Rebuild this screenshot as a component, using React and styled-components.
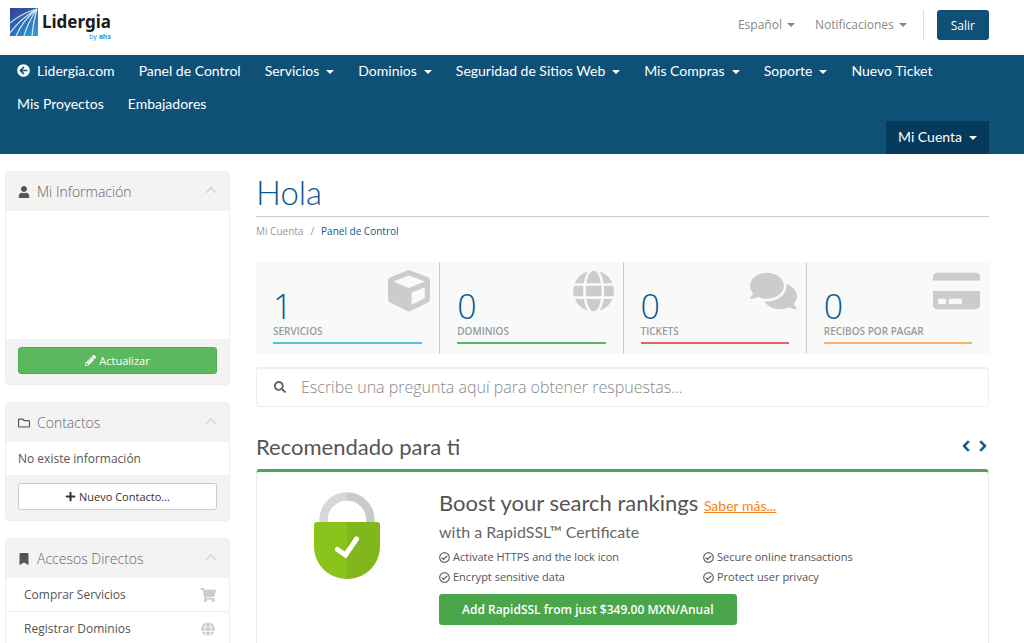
import React from "react";
import styled, { createGlobalStyle } from "styled-components";
import {
  FaArrowCircleLeft,
  FaBookmark,
  FaChevronLeft,
  FaChevronRight,
  FaComments,
  FaCreditCard,
  FaCube,
  FaGlobe,
  FaPencilAlt,
  FaPlus,
  FaRegCheckCircle,
  FaRegFolder,
  FaSearch,
  FaShoppingCart,
  FaUser,
} from "react-icons/fa";
import { ChevronUp } from "lucide-react";

const menu = [
  { nombre: "Lidergia.com", icono: <FaArrowCircleLeft /> },
  { nombre: "Panel de Control" },
  { nombre: "Servicios", lista: true },
  { nombre: "Dominios", lista: true },
  { nombre: "Seguridad de Sitios Web", lista: true },
  { nombre: "Mis Compras", lista: true },
  { nombre: "Soporte", lista: true },
  { nombre: "Nuevo Ticket" },
  { nombre: "Mis Proyectos" },
  { nombre: "Embajadores" },
];

const resumen = [
  { total: 1, nombre: "Servicios", color: "#5bc0de", Icono: FaCube },
  { total: 0, nombre: "Dominios", color: "#5cb85c", Icono: FaGlobe },
  { total: 0, nombre: "Tickets", color: "#e06666", Icono: FaComments },
  { total: 0, nombre: "Recibos por pagar", color: "#fbb161", Icono: FaCreditCard },
];

const ventajas = [
  "Activate HTTPS and the lock icon",
  "Secure online transactions",
  "Encrypt sensitive data",
  "Protect user privacy",
];

function Logo() {
  return (
    <LogoStyle href="#">
      <svg width="28" height="28" viewBox="0 0 28 28" aria-hidden="true">
        <defs>
          <linearGradient id="cielo" x1="0" y1="0" x2="0.8" y2="1">
            <stop offset="0" stopColor="#3a3d92" />
            <stop offset="0.4" stopColor="#2f5fa8" />
            <stop offset="1" stopColor="#2f98d4" />
          </linearGradient>
        </defs>
        <rect width="28" height="28" fill="url(#cielo)" />
        <g stroke="#d5ecf8" strokeWidth="1.2" fill="none">
          <path d="M27 1 Q12 5 0 15" />
          <path d="M27 1 Q11 10 0 25" />
          <path d="M27 1 Q13 12 6 28" />
          <path d="M27 1 Q18 14 14 28" />
          <path d="M27 1 Q23 14 22 28" />
        </g>
      </svg>
      <NombreLogo>
        Lidergia
        <small>
          by <b>ahs</b>
        </small>
      </NombreLogo>
    </LogoStyle>
  );
}

function Panel({ icono, titulo, children, pie }) {
  return (
    <PanelStyle>
      <CabeceraPanel>
        {icono}
        <h3>{titulo}</h3>
        <BotonPlegar type="button" aria-label={`Plegar ${titulo}`}>
          <ChevronUp />
        </BotonPlegar>
      </CabeceraPanel>
      {children}
      {pie && <PiePanel>{pie}</PiePanel>}
    </PanelStyle>
  );
}

function Candado() {
  return (
    <svg width="66" height="88" viewBox="0 0 66 88" aria-hidden="true">
      <path d="M9.5 32 V27.5 A23.5 23.5 0 0 1 33 4.5" fill="none" stroke="#d5d7d8" strokeWidth="8.5" />
      <path d="M33 4.5 A23.5 23.5 0 0 1 56.5 27.5 V32" fill="none" stroke="#c9cacb" strokeWidth="8.5" />
      <path d="M33 30 H3 Q0 30 0 33 V54 C0 73 15 87 33 87 Z" fill="#8bc31d" />
      <path d="M33 30 H63 Q66 30 66 33 V54 C66 73 51 87 33 87 Z" fill="#82b71b" />
      <path d="M23.5 57.5 L31.5 63 L42.5 47" fill="none" stroke="#fff" strokeWidth="5" strokeLinecap="round" />
    </svg>
  );
}

export default function App() {
  return (
    <>
      <EstiloGlobal />
      <Encabezado>
        <Logo />
        <MenuSuperior>
          <Selector type="button">
            Español <Flecha />
          </Selector>
          <Selector type="button">
            Notificaciones <Flecha />
          </Selector>
          <Separador />
          <BotonSalir type="button">Salir</BotonSalir>
        </MenuSuperior>
      </Encabezado>

      <Navegacion>
        <ListaMenu>
          {menu.map(({ nombre, icono, lista }) => (
            <li key={nombre}>
              <EnlaceMenu href="#">
                {icono}
                {nombre}
                {lista && <Flecha />}
              </EnlaceMenu>
            </li>
          ))}
        </ListaMenu>
        <EnlaceMenu href="#" $activo>
          Mi Cuenta
          <Flecha />
        </EnlaceMenu>
      </Navegacion>

      <Pagina>
        <Lateral>
          <Panel
            icono={<FaUser />}
            titulo="Mi Información"
            pie={
              <BotonPanel type="button" $verde>
                <FaPencilAlt /> Actualizar
              </BotonPanel>
            }
          >
            <DatosCliente />
          </Panel>
          <Panel
            icono={<FaRegFolder />}
            titulo="Contactos"
            pie={
              <BotonPanel type="button">
                <FaPlus /> Nuevo Contacto...
              </BotonPanel>
            }
          >
            <TextoPanel>No existe información</TextoPanel>
          </Panel>
          <Panel icono={<FaBookmark />} titulo="Accesos Directos">
            <Acceso href="#">
              Comprar Servicios <FaShoppingCart />
            </Acceso>
            <Acceso href="#">
              Registrar Dominios <FaGlobe />
            </Acceso>
          </Panel>
        </Lateral>

        <Contenido>
          <Titulo>Hola</Titulo>
          <Migas>
            <a href="#">Mi Cuenta</a>
            <span>/</span>
            <strong>Panel de Control</strong>
          </Migas>

          <Resumen>
            {resumen.map(({ total, nombre, color, Icono }) => (
              <Tarjeta key={nombre} href="#">
                <IconoTarjeta>
                  <Icono preserveAspectRatio="xMaxYMid" />
                </IconoTarjeta>
                <Total>{total}</Total>
                <NombreTarjeta $color={color}>{nombre}</NombreTarjeta>
              </Tarjeta>
            ))}
          </Resumen>

          <Buscador>
            <FaSearch />
            <input
              type="text"
              aria-label="Buscar"
              placeholder="Escribe una pregunta aquí para obtener respuestas..."
            />
          </Buscador>

          <CabeceraPromo>
            <h3>Recomendado para ti</h3>
            <div>
              <BotonFlecha type="button" aria-label="Anterior">
                <FaChevronLeft />
              </BotonFlecha>
              <BotonFlecha type="button" aria-label="Siguiente">
                <FaChevronRight />
              </BotonFlecha>
            </div>
          </CabeceraPromo>

          <Promo>
            <ImagenPromo>
              <Candado />
            </ImagenPromo>
            <div>
              <TituloPromo>
                Boost your search rankings <a href="#">Saber más...</a>
              </TituloPromo>
              <SubtituloPromo>with a RapidSSL™ Certificate</SubtituloPromo>
              <Ventajas>
                {ventajas.map((ventaja) => (
                  <li key={ventaja}>
                    <FaRegCheckCircle /> {ventaja}
                  </li>
                ))}
              </Ventajas>
              <BotonPromo type="button">Add RapidSSL from just $349.00 MXN/Anual</BotonPromo>
            </div>
          </Promo>
        </Contenido>
      </Pagina>
    </>
  );
}

const EstiloGlobal = createGlobalStyle`
  :root {
    --azul: #0f5077;
    --azul-oscuro: #053a5c;
    --azul-texto: #0d578c;
    --gris-panel: #f3f3f3;
    --texto: #555555;
    --fuente: "Open Sans", "Noto Sans", sans-serif;
    --fuente-titulos: Lato, "Open Sans", sans-serif;
  }

  * {
    box-sizing: border-box;
    margin: 0;
    padding: 0;
  }

  body {
    background-color: #ffffff;
    color: var(--texto);
    font-family: var(--fuente);
    font-size: 12px;
  }

  button, input {
    font-family: inherit;
  }

  a {
    color: inherit;
    text-decoration: none;
  }

  ul {
    list-style: none;
  }
`;

const Encabezado = styled.header`
  display: flex;
  align-items: flex-start;
  justify-content: space-between;
  height: 55px;
  padding: 8px 35px 0 10px;
`;

const LogoStyle = styled.a`
  display: flex;
  gap: 4px;
`;

const NombreLogo = styled.span`
  display: flex;
  flex-direction: column;
  color: #1b1b1b;
  font-family: "Noto Sans", sans-serif;
  font-size: 17px;
  font-weight: 700;
  line-height: 27px;

  small {
    align-self: flex-end;
    color: #2f94d0;
    font-size: 7px;
    font-weight: 400;
    line-height: 4px;
  }
`;

const MenuSuperior = styled.div`
  display: flex;
  align-items: center;
  gap: 20px;
  padding-top: 2px;
`;

const Selector = styled.button`
  display: flex;
  align-items: center;
  gap: 5px;
  padding-bottom: 2px;
  border: none;
  background: none;
  color: #888888;
  font-size: 12px;
`;

const Separador = styled.span`
  width: 1px;
  height: 30px;
  margin: 0 -7px 0 -4px;
  background-color: #dddddd;
`;

const BotonSalir = styled.button`
  height: 30px;
  padding: 0 14px;
  border: none;
  border-radius: 3px;
  background-color: var(--azul);
  color: #ffffff;
  font-size: 12px;
`;

const Navegacion = styled.nav`
  display: flex;
  flex-direction: column;
  align-items: flex-end;
  padding: 0 35px 0 5px;
  background-color: var(--azul);
`;

const ListaMenu = styled.ul`
  display: flex;
  flex-wrap: wrap;
  width: 100%;
`;

const EnlaceMenu = styled.a`
  display: flex;
  align-items: center;
  gap: 7px;
  height: 33px;
  padding: 0 12px 2px;
  background-color: ${(props) => (props.$activo ? "var(--azul-oscuro)" : "transparent")};
  color: #ffffff;
  font-family: var(--fuente-titulos);
  font-size: 14px;

  svg {
    width: 13px;
    height: 13px;
  }
`;

const Flecha = styled.span`
  margin-top: 2px;
  border-top: 4px solid currentColor;
  border-left: 4px solid transparent;
  border-right: 4px solid transparent;
`;

const Pagina = styled.main`
  display: grid;
  grid-template-columns: 225px 1fr;
  gap: 26px;
  padding: 17px 35px 0 5px;
`;

const Lateral = styled.aside`
  display: flex;
  flex-direction: column;
  gap: 17px;
`;

const PanelStyle = styled.section`
  border: 1px solid #eeeeee;
  border-radius: 4px;
  overflow: hidden;
`;

const CabeceraPanel = styled.div`
  display: flex;
  align-items: center;
  gap: 7px;
  height: 39px;
  padding: 0 9px 0 12px;
  background-color: var(--gris-panel);

  h3 {
    flex: 1;
    color: #666666;
    font-size: 14px;
    font-weight: 300;
  }
`;

const BotonPlegar = styled.button`
  display: flex;
  padding-bottom: 4px;
  border: none;
  background: none;
  color: #d5d5d5;

  svg {
    width: 18px;
    height: 18px;
  }
`;

const DatosCliente = styled.div`
  height: 128px;
`;

const TextoPanel = styled.p`
  padding: 0 12px;
  line-height: 33px;
`;

const PiePanel = styled.div`
  padding: 8px 12px 10px;
  background-color: var(--gris-panel);
`;

const BotonPanel = styled.button`
  display: flex;
  align-items: center;
  justify-content: center;
  gap: 3px;
  width: 100%;
  height: 27px;
  border: 1px solid ${(props) => (props.$verde ? "#4cae4c" : "#cccccc")};
  border-radius: 3px;
  background-color: ${(props) => (props.$verde ? "#5cb85c" : "#ffffff")};
  color: ${(props) => (props.$verde ? "#ffffff" : "#333333")};
  font-size: 11px;
`;

const Acceso = styled.a`
  display: flex;
  align-items: center;
  justify-content: space-between;
  height: 34px;
  padding: 0 13px 0 18px;
  border-bottom: 1px solid #eeeeee;

  svg {
    width: 16px;
    height: 14px;
    color: #cccccc;
  }
`;

const Contenido = styled.div`
  min-width: 0;
`;

const Titulo = styled.h1`
  padding-bottom: 2px;
  border-bottom: 1px solid #cccccc;
  color: var(--azul-texto);
  font-family: var(--fuente-titulos);
  font-size: 33px;
  font-weight: 300;
  line-height: 43px;
`;

const Migas = styled.div`
  display: flex;
  gap: 7px;
  padding: 6px 0;
  color: #999999;
  font-size: 10px;
  line-height: 16px;

  strong {
    color: var(--azul-texto);
    font-weight: 400;
  }
`;

const Resumen = styled.div`
  display: grid;
  grid-template-columns: repeat(4, 1fr);
  margin-top: 17px;
`;

const Tarjeta = styled.a`
  position: relative;
  padding: 27px 17px 10px;
  background-color: #f8f9f9;

  & + & {
    border-left: 1px solid #cccccc;
  }
`;

const IconoTarjeta = styled.span`
  position: absolute;
  top: 8px;
  right: 9px;
  color: #cccccc;

  svg {
    display: block;
    width: 47px;
    height: 42px;
  }
`;

const Total = styled.div`
  color: var(--azul-texto);
  font-size: 34px;
  font-weight: 300;
  line-height: 34px;
`;

const NombreTarjeta = styled.div`
  padding-bottom: 3px;
  border-bottom: 2px solid ${(props) => props.$color};
  color: #999999;
  font-size: 10px;
  font-weight: 600;
  line-height: 16px;
  text-transform: uppercase;
`;

const Buscador = styled.label`
  display: flex;
  align-items: center;
  gap: 15px;
  height: 40px;
  margin-top: 13px;
  padding: 0 17px 1px;
  border: 1px solid #eeeeee;
  border-top-width: 2px;
  border-radius: 4px;

  svg {
    color: #666666;
  }

  input {
    flex: 1;
    border: none;
    outline: none;
    font-size: 16px;
    font-weight: 300;
  }

  input::placeholder {
    color: #888888;
  }
`;

const CabeceraPromo = styled.div`
  display: flex;
  align-items: center;
  justify-content: space-between;
  margin-top: 25px;

  h3 {
    font-family: var(--fuente-titulos);
    font-size: 22px;
    font-weight: 400;
    line-height: 30px;
  }
`;

const BotonFlecha = styled.button`
  margin-left: 5px;
  border: none;
  background: none;
  color: var(--azul-texto);
  font-size: 12px;

  svg {
    stroke: currentColor;
    stroke-width: 40px;
  }
`;

const Promo = styled.section`
  display: grid;
  grid-template-columns: 182px 1fr;
  margin-top: 7px;
  padding-top: 20px;
  border: 1px solid #e8e8e8;
  border-top: 3px solid #4ba64b;
  border-radius: 4px 4px 0 0;
`;

const ImagenPromo = styled.div`
  display: flex;
  justify-content: center;
  padding-right: 2px;
`;

const TituloPromo = styled.h4`
  font-family: var(--fuente-titulos);
  font-size: 22px;
  font-weight: 400;
  line-height: 22px;

  a {
    color: #fd7e14;
    font-size: 14px;
    text-decoration: underline;
  }
`;

const SubtituloPromo = styled.h5`
  color: #666666;
  font-family: var(--fuente-titulos);
  font-size: 16px;
  font-weight: 400;
  line-height: 30px;
`;

const Ventajas = styled.ul`
  display: grid;
  grid-template-columns: 264px 1fr;
  font-size: 11px;
  line-height: 20px;

  li {
    display: flex;
    align-items: center;
    gap: 3px;
  }
`;

const BotonPromo = styled.button`
  height: 31px;
  margin: 7px 0 24px;
  padding: 0 23px;
  border: none;
  border-radius: 3px;
  background-color: #4ba64b;
  color: #ffffff;
  font-size: 12px;
  font-weight: 600;
`;
